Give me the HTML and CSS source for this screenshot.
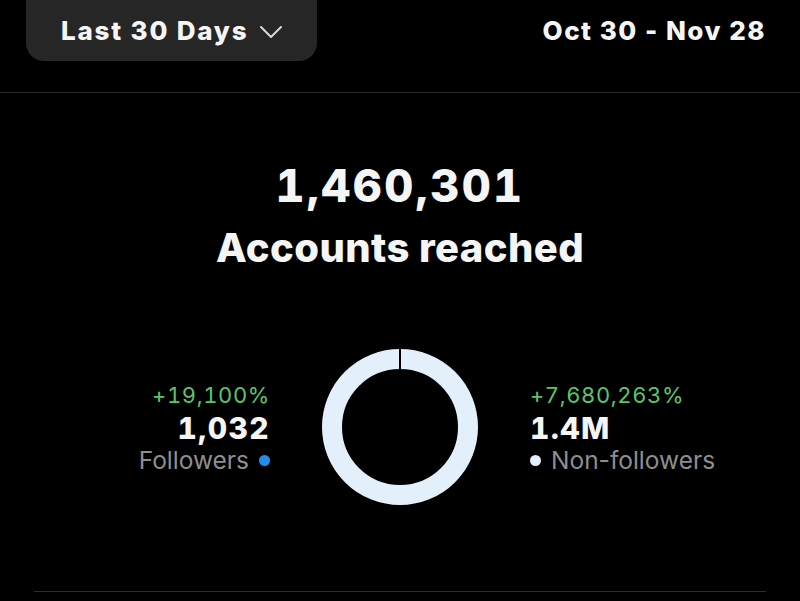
FILE: index.html
```html
<!DOCTYPE html>
<html lang="en">
<head>
  <meta charset="UTF-8" />
  <meta name="viewport" content="width=device-width, initial-scale=1.0"/>
  <title>Insights - Accounts reached</title>
  <link rel="stylesheet" href="styles.css">
</head>
<body>
  <div class="top-bar">
    <button class="range-btn">
      Last 30 Days
      <svg class="chevron" width="22" height="12" viewBox="0 0 22 12">
        <path d="M1 1 L11 11 L21 1" fill="none" stroke="#d8d8d8" stroke-width="2" stroke-linecap="round" stroke-linejoin="round"/>
      </svg>
    </button>
    <div class="date-range">Oct 30 - Nov 28</div>
  </div>

  <div class="reach">
    <div class="reach-total">1,460,301</div>
    <div class="reach-label">Accounts reached</div>
  </div>

  <div class="split">
    <div class="side left">
      <div class="change">+19,100%</div>
      <div class="count">1,032</div>
      <div class="kind">Followers <span class="dot followers"></span></div>
    </div>

    <svg class="donut" width="156" height="156" viewBox="0 0 156 156">
      <circle cx="78" cy="78" r="68" fill="none" stroke="#e3f0fb" stroke-width="20"/>
      <line x1="78" y1="0" x2="78" y2="21" stroke="#000" stroke-width="2"/>
    </svg>

    <div class="side right">
      <div class="change">+7,680,263%</div>
      <div class="count">1.4M</div>
      <div class="kind"><span class="dot others"></span> Non-followers</div>
    </div>
  </div>

  <div class="bottom-line"></div>
</body>
</html>
```

FILE: styles.css
```css
body {
  margin: 0;
  padding: 0;
  background: #000;
  color: #f5f5f5;
  font-family: Inter, 'Liberation Sans', sans-serif;
  height: 601px;
  overflow: hidden;
}

.top-bar {
  display: flex;
  justify-content: space-between;
  align-items: flex-start;
  height: 92px;
  padding: 0 34px 0 26px;
  border-bottom: 1px solid #2c2c2c;
}

.range-btn {
  display: flex;
  align-items: center;
  gap: 12px;
  height: 61px;
  padding: 0 35px;
  border: none;
  border-radius: 0 0 18px 18px;
  background: #262626;
  color: #f5f5f5;
  font-family: inherit;
  font-size: 26px;
  font-weight: 800;
  letter-spacing: 1.8px;
}

.chevron {
  margin-top: 2px;
}

.date-range {
  line-height: 61px;
  font-size: 26px;
  font-weight: 800;
  letter-spacing: 1.5px;
}

.reach {
  text-align: center;
  padding-top: 65px;
}

.reach-total {
  font-size: 45px;
  font-weight: 800;
  line-height: 56px;
  letter-spacing: 2.4px;
  font-variant-numeric: tabular-nums;
}

.reach-label {
  font-size: 40px;
  font-weight: 800;
  line-height: 56px;
  margin-top: 6px;
  letter-spacing: 0.4px;
}

.split {
  display: flex;
  justify-content: center;
  align-items: center;
  gap: 52px;
  margin-top: 73px;
}

.side {
  width: 200px;
  display: flex;
  flex-direction: column;
}

.side.left {
  align-items: flex-end;
}

.side.right {
  align-items: flex-start;
}

.change {
  color: #5cc56a;
  font-size: 22px;
  line-height: 33px;
  letter-spacing: 0.6px;
  font-variant-numeric: tabular-nums;
}

.count {
  font-size: 30px;
  font-weight: 800;
  line-height: 33px;
  letter-spacing: 1.4px;
  font-variant-numeric: tabular-nums;
}

.kind {
  display: flex;
  align-items: center;
  gap: 10px;
  color: #8e8e8e;
  font-size: 24.5px;
  line-height: 30px;
}

.dot {
  width: 11px;
  height: 11px;
  border-radius: 50%;
}

.dot.followers {
  background: #1d8ff0;
}

.dot.others {
  background: #e3f0fb;
}

.bottom-line {
  height: 1px;
  background: #2c2c2c;
  margin: 86px 34px 0;
}
```
